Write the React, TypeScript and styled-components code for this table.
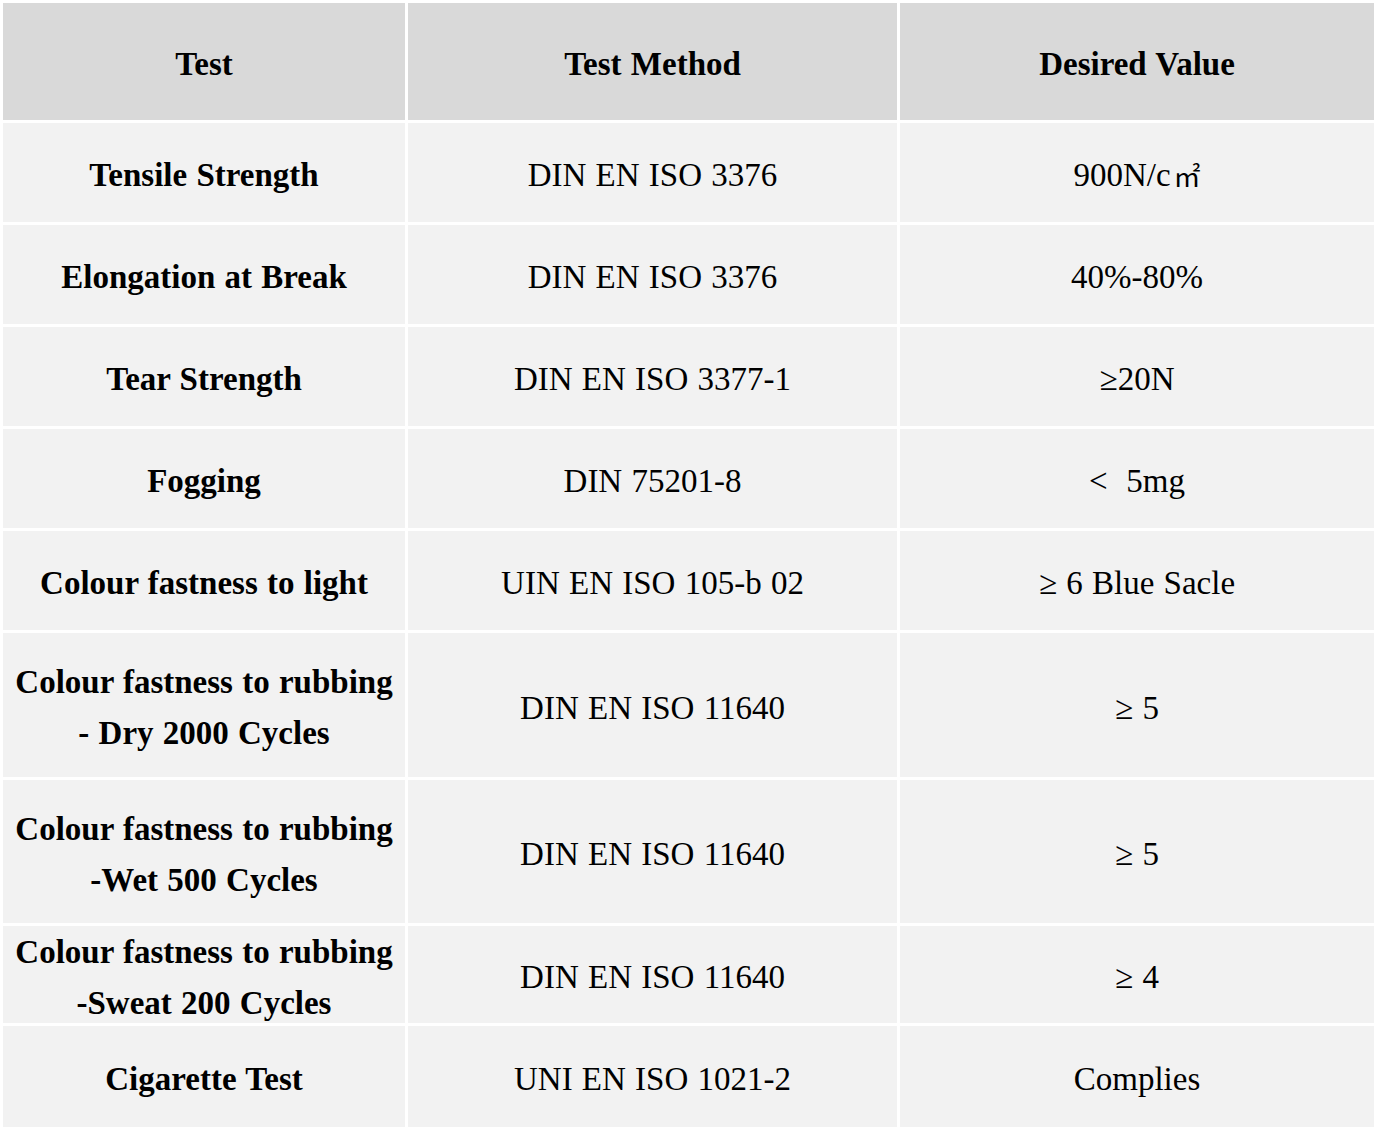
import React from "react";
import styled, { createGlobalStyle } from "styled-components";

const Global = createGlobalStyle`
  html, body { margin: 0; padding: 0; background: #ffffff; }
  body { font-family: "Liberation Serif", "Times New Roman", "Noto Sans CJK SC", serif; color: #000; }
`;

const Table = styled.div`
  display: grid;
  grid-template-columns: 402px 489px 474px;
  grid-template-rows: 117px 99px 99px 99px 99px 99px 144px 143px 97px 101px;
  gap: 3px;
  padding: 3px 0 0 3px;
  width: 1376px;
  box-sizing: border-box;
  background: #ffffff;
`;

const Cell = styled.div<{ $head?: boolean; $bold?: boolean }>`
  display: flex;
  align-items: center;
  justify-content: center;
  text-align: center;
  box-sizing: border-box;
  padding-top: 6px;
  background: ${(p) => (p.$head ? "#d9d9d9" : "#f2f2f2")};
  font-family: "Liberation Serif", "Times New Roman", "Noto Sans CJK SC", serif;
  font-size: 33px;
  line-height: 51px;
  font-weight: ${(p) => (p.$bold || p.$head ? 700 : 400)};
  word-spacing: 1px;
  white-space: nowrap;
  overflow: visible;
`;

const Unit = styled.span`
  font-family: "Noto Sans CJK SC", sans-serif;
  font-size: 27px;
  font-weight: 400;
  margin-left: 3px;
`;

type Row = { test: React.ReactNode; method: string; value: React.ReactNode };

const rows: Row[] = [
  { test: "Tensile Strength", method: "DIN EN ISO 3376", value: <>900N/c<Unit>㎡</Unit></> },
  { test: "Elongation at Break", method: "DIN EN ISO 3376", value: "40%-80%" },
  { test: "Tear Strength", method: "DIN EN ISO 3377-1", value: "≥20N" },
  { test: "Fogging", method: "DIN 75201-8", value: "<\u00a0 5mg" },
  { test: "Colour fastness to light", method: "UIN EN ISO 105-b 02", value: "≥ 6 Blue Sacle" },
  {
    test: <>Colour fastness to rubbing<br />- Dry 2000 Cycles</>,
    method: "DIN EN ISO 11640",
    value: "≥ 5",
  },
  {
    test: <>Colour fastness to rubbing<br />-Wet 500 Cycles</>,
    method: "DIN EN ISO 11640",
    value: "≥ 5",
  },
  {
    test: <>Colour fastness to rubbing<br />-Sweat 200 Cycles</>,
    method: "DIN EN ISO 11640",
    value: "≥ 4",
  },
  { test: "Cigarette Test", method: "UNI EN ISO 1021-2", value: "Complies" },
];

export default function App() {
  return (
    <>
      <Global />
      <Table>
        <Cell $head>Test</Cell>
        <Cell $head>Test Method</Cell>
        <Cell $head>Desired Value</Cell>
        {rows.map((r, i) => (
          <React.Fragment key={i}>
            <Cell $bold>
              <div>{r.test}</div>
            </Cell>
            <Cell>{r.method}</Cell>
            <Cell>{r.value}</Cell>
          </React.Fragment>
        ))}
      </Table>
    </>
  );
}
